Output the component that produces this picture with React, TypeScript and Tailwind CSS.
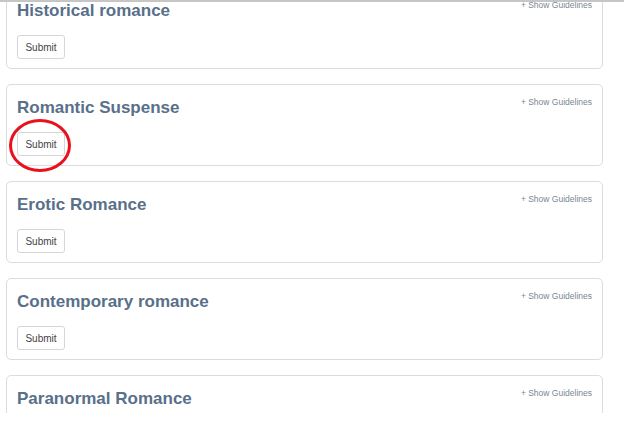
const genres = [
  "Historical romance",
  "Romantic Suspense",
  "Erotic Romance",
  "Contemporary romance",
  "Paranormal Romance",
];

function GenreCard({ title, marked }: { title: string; marked?: boolean }) {
  return (
    <div className="relative h-[82px] rounded-[5px] border border-[#dcdcdc] bg-white pl-[10px] pr-[10px] pt-[12px]">
      <div className="flex items-start justify-between">
        <h3 className="text-[17px] leading-[22px] font-bold text-[#587089]">{title}</h3>
        <button className="mt-[-1px] text-[8.5px] leading-[12px] text-[#7a8794]">+ Show Guidelines</button>
      </div>
      <button className="relative mt-[13px] h-[24px] w-[48px] rounded-[3px] border border-[#d6d6d6] bg-white text-[10px] text-[#444]">
        Submit
        {marked && (
          <span className="absolute left-[-9px] top-[-14px] h-[53px] w-[62px] rounded-[50%] border-[3px] border-[#e8121c]" />
        )}
      </button>
    </div>
  );
}

export default function App() {
  return (
    <div
      className="relative h-[421px] w-[624px] overflow-hidden bg-white"
      style={{ fontFamily: "'Liberation Sans', Arial, sans-serif" }}
    >
      <div className="absolute left-0 right-0 top-0 z-10 h-[2px] bg-[#c6c6c6]" />
      <div className="h-[413px] overflow-hidden">
        <div className="ml-[6px] mt-[-13px] flex w-[597px] flex-col gap-[15px]">
          {genres.map((g, i) => (
            <GenreCard key={g} title={g} marked={i === 1} />
          ))}
        </div>
      </div>
    </div>
  );
}
